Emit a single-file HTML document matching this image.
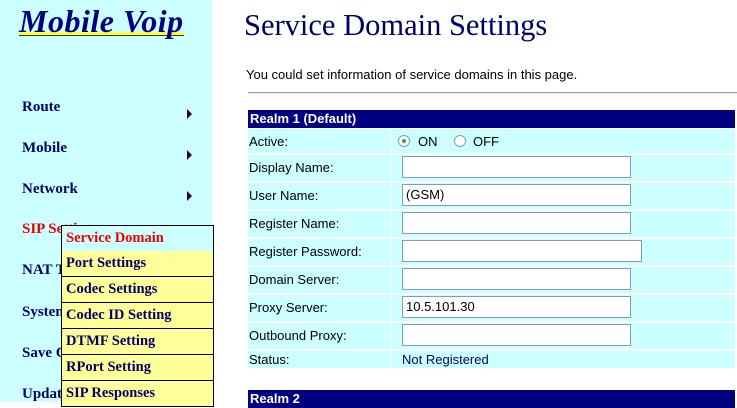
<!DOCTYPE html>
<html><head><style>
body{margin:0;width:737px;height:402px;overflow:hidden;background:#fff;position:relative;font-family:"Liberation Sans",Arial,sans-serif}
.a{position:absolute}
#side{left:0;top:0;width:212px;height:402px;background:#ccffff}
.logo{left:19px;top:3px;font-family:"Liberation Serif",serif;font-style:italic;font-weight:bold;font-size:32px;color:#000080;letter-spacing:0.5px}
.uline{left:19px;top:32px;width:165px;height:3px;background:#ffff33;border-bottom:1px solid #333}
.mi{left:22px;font-family:"Liberation Serif",serif;font-weight:bold;font-size:15px;color:#000066}
.arr{left:187px;width:0;height:0;border-top:5px solid transparent;border-bottom:5px solid transparent;border-left:5px solid #330033}
.sub{left:61px;width:147px;height:25px;border:1px solid #000;border-top:none;background:#ffff99;font-family:"Liberation Serif",serif;font-weight:bold;font-size:14.5px;color:#000066;line-height:25px;padding-left:4px;box-sizing:content-box}
h1{position:absolute;left:244px;top:8px;margin:0;font-family:"Liberation Serif",serif;font-weight:normal;font-size:30.5px;color:#000066}
.t{font-size:13px}
.row{left:248px;width:487px;background:#ccffff}
.lab{left:249px;font-size:13px;color:#000}
.inp{left:402px;width:224px;height:20px;border:1px solid #7f9db9;background:#fff;font-size:13px;line-height:20px;padding-left:3px;box-sizing:content-box}
.hdr{left:248px;width:487px;background:#000080;color:#fff;font-weight:bold;font-size:13px;padding-left:2px;box-sizing:border-box}
.rad{width:12px;height:12px;border:1px solid #7f9db9;border-radius:50%;background:#fff;box-sizing:border-box}
</style></head><body>
<div class="a" id="side"></div>
<div class="a uline"></div>
<div class="a logo">Mobile Voip</div>
<div class="a mi" style="top:99px">Route</div><div class="a arr" style="top:109px"></div>
<div class="a mi" style="top:140px">Mobile</div><div class="a arr" style="top:150px"></div>
<div class="a mi" style="top:181px">Network</div><div class="a arr" style="top:191px"></div>
<div class="a mi" style="top:221px;color:#ee0000">SIP Settings</div>
<div class="a mi" style="top:262px">NAT Traversal</div>
<div class="a mi" style="top:304px">System</div>
<div class="a mi" style="top:345px">Save Config</div>
<div class="a mi" style="top:386px">Update</div>
<div class="a sub" style="top:225px;border-top:1px solid #000;height:25px;background:#ccffff;color:#ee0000">Service Domain</div>
<div class="a sub" style="top:251px">Port Settings</div>
<div class="a sub" style="top:277px">Codec Settings</div>
<div class="a sub" style="top:303px">Codec ID Setting</div>
<div class="a sub" style="top:329px">DTMF Setting</div>
<div class="a sub" style="top:355px">RPort Setting</div>
<div class="a sub" style="top:381px">SIP Responses</div>

<h1>Service Domain Settings</h1>
<div class="a t" style="left:246px;top:67px">You could set information of service domains in this page.</div>
<div class="a" style="left:248px;top:92px;width:489px;height:1px;background:#999;border-bottom:1px solid #eee"></div>
<div class="a hdr" style="top:110px;height:18px;line-height:18px">Realm 1 (Default)</div>

<div class="a row" style="top:129px;height:24px"></div>
<div class="a row" style="top:155px;height:26px"></div>
<div class="a row" style="top:183px;height:26px"></div>
<div class="a row" style="top:211px;height:26px"></div>
<div class="a row" style="top:239px;height:26px"></div>
<div class="a row" style="top:267px;height:26px"></div>
<div class="a row" style="top:295px;height:26px"></div>
<div class="a row" style="top:323px;height:26px"></div>
<div class="a row" style="top:351px;height:17px"></div>
<div class="a" style="left:390px;top:128px;width:2px;height:240px;background:#e8ffff"></div>

<div class="a lab" style="top:134px">Active:</div>
<div class="a rad" style="left:398px;top:135px"></div><div class="a" style="left:402px;top:139px;width:4px;height:4px;border-radius:50%;background:#3a3"></div>
<div class="a t" style="left:418px;top:134px">ON</div>
<div class="a rad" style="left:454px;top:135px"></div>
<div class="a t" style="left:473px;top:134px">OFF</div>
<div class="a lab" style="top:160px">Display Name:</div><div class="a inp" style="top:156px"></div>
<div class="a lab" style="top:188px">User Name:</div><div class="a inp" style="top:184px">(GSM)</div>
<div class="a lab" style="top:216px">Register Name:</div><div class="a inp" style="top:212px"></div>
<div class="a lab" style="top:244px">Register Password:</div><div class="a inp" style="top:240px;width:235px"></div>
<div class="a lab" style="top:272px">Domain Server:</div><div class="a inp" style="top:268px"></div>
<div class="a lab" style="top:300px">Proxy Server:</div><div class="a inp" style="top:296px">10.5.101.30</div>
<div class="a lab" style="top:328px">Outbound Proxy:</div><div class="a inp" style="top:324px"></div>
<div class="a lab" style="top:352px">Status:</div>
<div class="a t" style="left:402px;top:352px;color:#000066">Not Registered</div>
<div class="a hdr" style="top:390px;height:18px;line-height:18px">Realm 2</div>
</body></html>
